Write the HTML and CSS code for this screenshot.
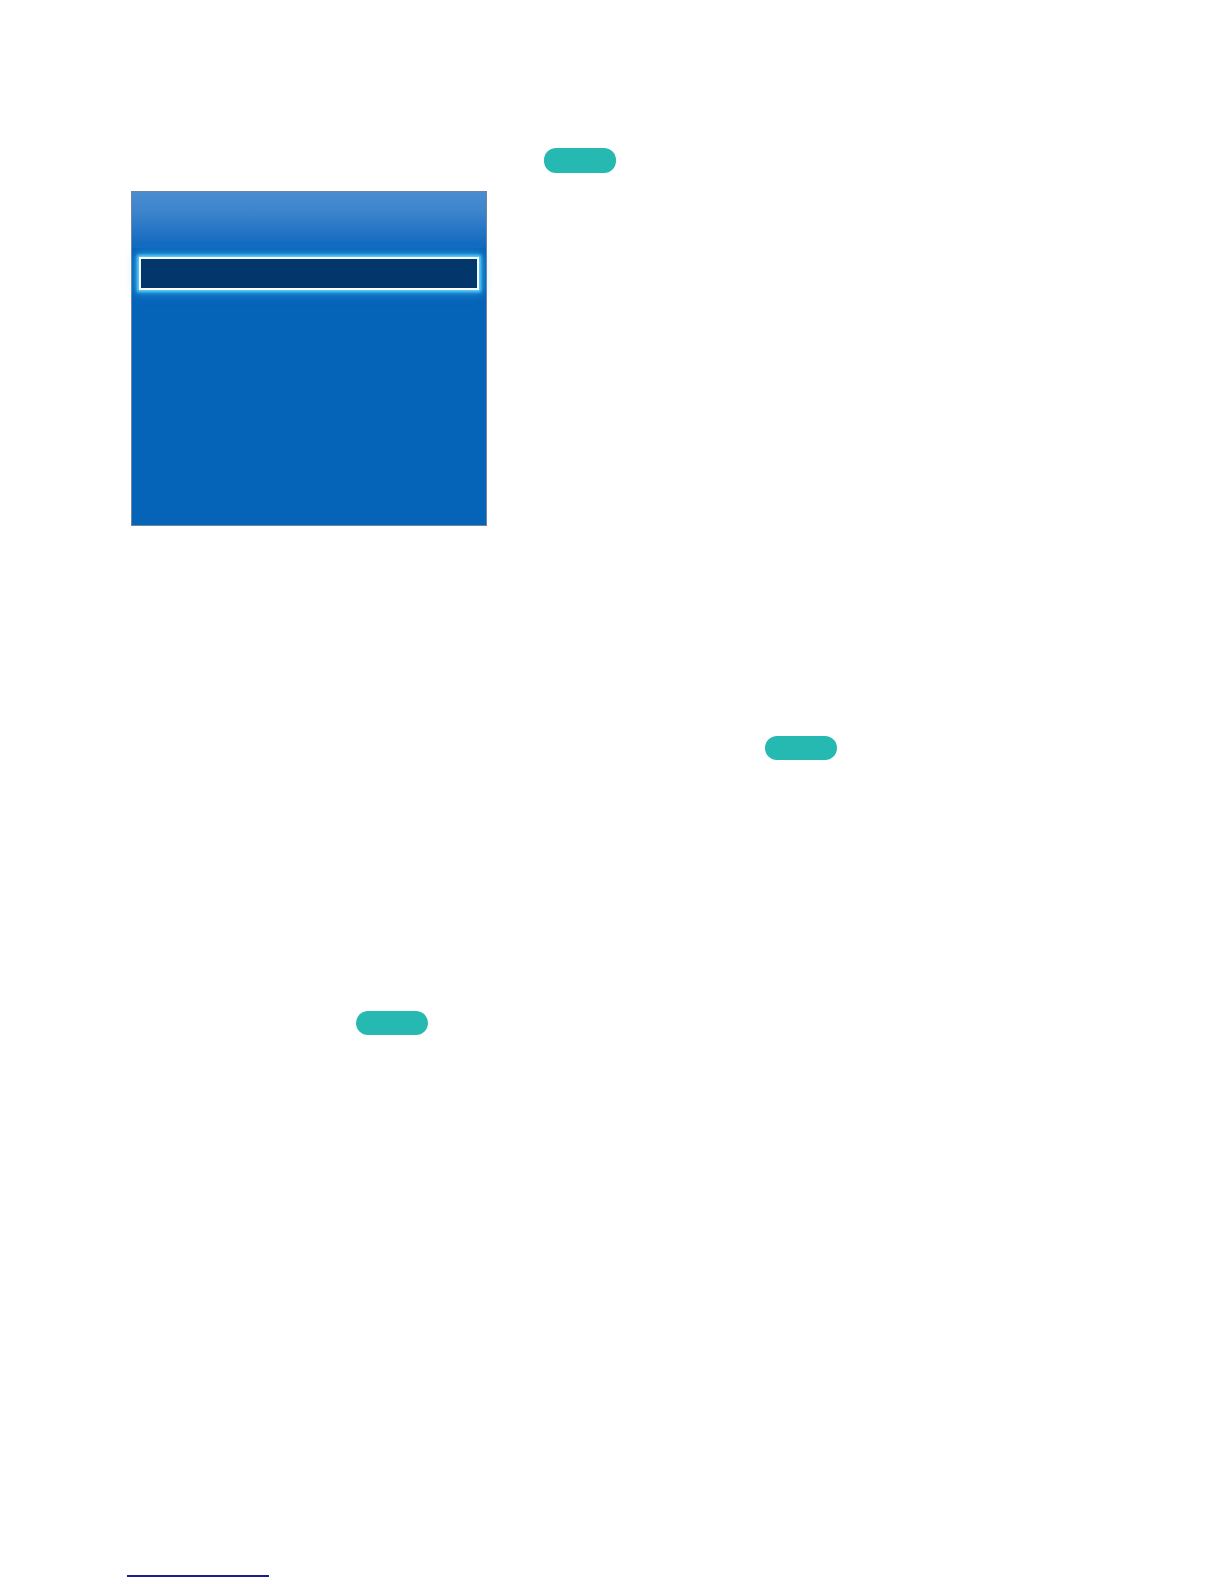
FILE: index.html
```html
<!DOCTYPE html>
<html lang="en">
<head>
<meta charset="utf-8">
<title>e-Manual</title>
<link rel="stylesheet" href="styles.css">
</head>
<body>
<div class="page">
  <div class="line line-one"><span class="try" aria-label="Try Now"></span></div>
  <div class="screen">
    <div class="screen-head"></div>
    <div class="screen-list">
      <div class="item selected"></div>
    </div>
  </div>
  <div class="line line-two"><span class="try" aria-label="Try Now"></span></div>
  <div class="line line-three"><span class="try" aria-label="Try Now"></span></div>
  <div class="footer"><a class="toc-link" href="#" aria-label="Contents"></a></div>
</div>
</body>
</html>
```
FILE: styles.css
```css
html, body {
  margin: 0;
  padding: 0;
  background: #ffffff;
  font-family: "Liberation Sans", Arial, sans-serif;
}

.page {
  width: 1224px;
  height: 1584px;
  overflow: hidden;
}

.line {
  display: flex;
  height: 24px;
}

.try {
  display: block;
  width: 72px;
  height: 24px;
  border-radius: 12px;
  background: #26b9b1;
}

.line-one {
  margin-top: 148px;
  padding-left: 544px;
  height: 25px;
}
.line-one .try {
  height: 25px;
}

.screen {
  margin-top: 18px;
  margin-left: 131px;
  width: 356px;
  height: 335px;
  box-sizing: border-box;
  border: 1px solid #6f84a0;
  background: #0563b8;
  display: flex;
  flex-direction: column;
}

.screen-head {
  height: 56px;
  background: linear-gradient(to bottom, #4a8ccf 0%, #3d84cc 35%, #2172c4 75%, #0d68bd 100%);
}

.screen-list {
  padding: 9px 7px 0 7px;
}

.item {
  height: 33px;
}

.item.selected {
  box-sizing: border-box;
  border: 2px solid #ffffff;
  background: #03376c;
  box-shadow: 0 0 3px 2px #5ad8ff, 0 0 10px 4px rgba(80, 200, 255, 0.4);
}

.line-two {
  margin-top: 210px;
  padding-left: 765px;
}

.line-three {
  margin-top: 251px;
  padding-left: 356px;
}

.footer {
  margin-top: 540px;
  padding-left: 127px;
}

.toc-link {
  display: block;
  width: 142px;
  height: 2px;
  background: #1c1c8c;
}
```
